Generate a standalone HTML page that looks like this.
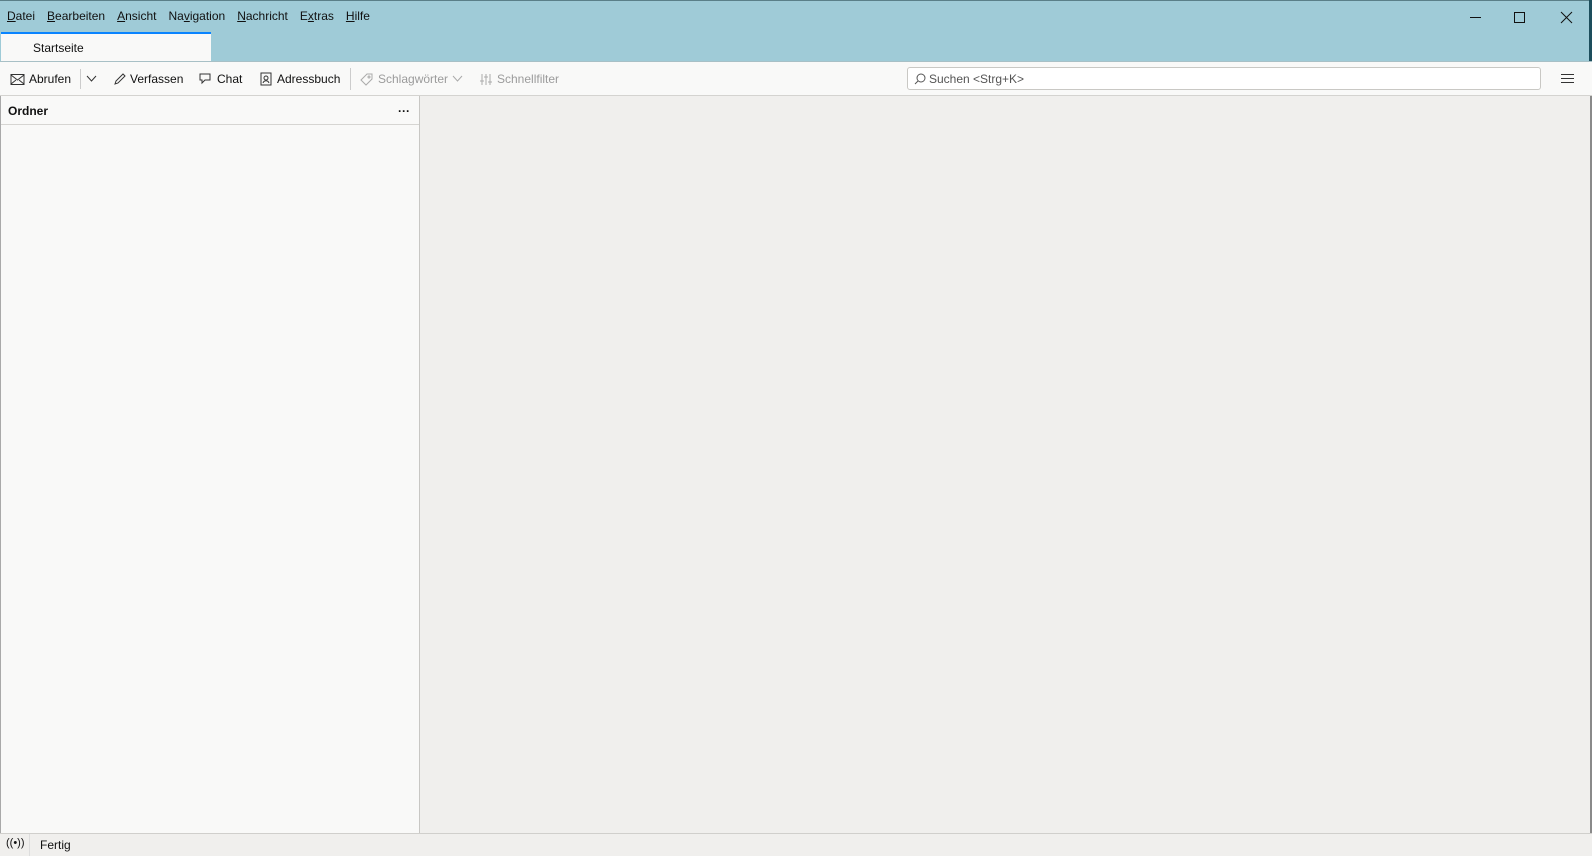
<!DOCTYPE html>
<html><head><meta charset="utf-8"><style>
*{margin:0;padding:0;box-sizing:border-box}
body{width:1592px;height:855px;overflow:hidden;font-family:"Liberation Sans",sans-serif;font-size:12px;color:#111;background:#f0efed;position:relative}
.title{position:absolute;left:0;top:0;width:1592px;height:61px;background:#9fcbd7;border-top:1px solid #5a7f88}
.menu{position:absolute;top:8px;left:7px;display:flex;gap:12px;font-size:12px}
.menu u{text-decoration:underline}
.tab{position:absolute;left:1px;top:32px;width:210px;height:30px;background:#f9f9f8;border-top:2px solid #0a84ff;padding:7px 0 0 32px;font-size:12px}
.tb{position:absolute;left:0;top:61px;width:1592px;height:35px;background:#f9f9f8;border-top:1px solid #a8c0c6;border-bottom:1px solid #d4d3d0}
.it{position:absolute;top:10px;display:flex;align-items:center;gap:4px;font-size:12px}
.dis{color:#9b9b9b}
.search{position:absolute;left:907px;top:5px;width:634px;height:23px;background:#fff;border:1px solid #c9c8c4;border-radius:3px;padding:4px 0 0 21px;color:#555;font-size:12px}
.fp{position:absolute;left:0;top:96px;width:420px;height:737px;background:#f9f9f8;border-right:1px solid #c8c7c4;border-left:1px solid #a9a9a9}
.fh{height:29px;border-bottom:1px solid #d6d5d2;font-weight:bold;padding:8px 0 0 7px;font-size:12px}
.st{position:absolute;left:0;top:833px;width:1592px;height:22px;background:#f0efed;border-top:1px solid #d0cfcc;font-size:12px}
</style></head><body>
<div class="title">
 <div class="menu"><span><u>D</u>atei</span><span><u>B</u>earbeiten</span><span><u>A</u>nsicht</span><span>Na<u>v</u>igation</span><span><u>N</u>achricht</span><span>E<u>x</u>tras</span><span><u>H</u>ilfe</span></div>
 <svg style="position:absolute;left:1468px;top:10px" width="110" height="14" stroke="#111" fill="none" stroke-width="1"><path d="M2 6.5h11"/><path d="M46.5 1.5h10v10h-10z"/><path d="M93 1l11 11M104 1l-11 11"/></svg>
</div>
<div style="position:absolute;right:0;top:0;width:3px;height:61px;background:#1d4e5c"></div>
<div style="position:absolute;right:0;top:61px;width:2px;height:794px;background:#8a8a8a"></div>
<div class="tab">Startseite</div>
<div class="tb">
 <div class="it" style="left:10px"><svg width="15" height="13" fill="none" stroke="#333"><rect x="1" y="1.5" width="13" height="10"/><path d="M1 2l6.5 5 6.5-5M1 11l5-4M14 11l-5-4"/></svg>Abrufen</div>
 <div style="position:absolute;left:80px;top:7px;width:1px;height:20px;background:#ccc"></div>
 <svg style="position:absolute;left:86px;top:13px" width="11" height="8" fill="none" stroke="#333"><path d="M1 1l4.5 5 4.5-5"/></svg>
 <div class="it" style="left:113px"><svg width="13" height="13" fill="none" stroke="#333"><path d="M2 11l1-3 7-7 2 2-7 7z"/></svg>Verfassen</div>
 <div class="it" style="left:198px"><svg width="15" height="14" fill="none" stroke="#333"><path d="M2 2h10v6H7l-3 3V8H2z"/></svg>Chat</div>
 <div class="it" style="left:259px"><svg width="14" height="14" fill="none" stroke="#333"><rect x="2" y="1" width="10" height="12"/><circle cx="7" cy="6" r="2"/><path d="M4 11c1-3 5-3 6 0"/></svg>Adressbuch</div>
 <div style="position:absolute;left:350px;top:6px;width:1px;height:22px;background:#ccc"></div>
 <div class="it dis" style="left:359px"><svg width="15" height="14" fill="none" stroke="#aaa"><path d="M2 8l6-6h5v5l-6 6z"/><circle cx="10" cy="5" r="1"/></svg>Schlagwörter <svg width="11" height="8" fill="none" stroke="#aaa"><path d="M1 1l4.5 5 4.5-5"/></svg></div>
 <div class="it dis" style="left:480px"><svg width="13" height="13" fill="none" stroke="#aaa"><path d="M2 1v11M6 1v11M10 1v11M0 8h4M4 4h4M8 9h4"/></svg>Schnellfilter</div>
 <div class="search"><svg style="position:absolute;left:6px;top:5px" width="12" height="12" fill="none" stroke="#555"><circle cx="7" cy="5" r="4"/><path d="M4 8l-3 3"/></svg>Suchen &lt;Strg+K&gt;</div>
 <svg style="position:absolute;left:1561px;top:11px" width="13" height="11" stroke="#333"><path d="M0 1.5h13M0 5.5h13M0 9.5h13"/></svg>
</div>
<div class="fp"><div class="fh">Ordner<span style="position:absolute;left:397px;top:8px;font-weight:bold">···</span></div></div>
<div class="st"><span style="position:absolute;left:6px;top:3px;font-size:11px">((•))</span><div style="position:absolute;left:29px;top:0;width:1px;height:22px;background:#ddd"></div><span style="position:absolute;left:40px;top:4px">Fertig</span></div>
</body></html>
